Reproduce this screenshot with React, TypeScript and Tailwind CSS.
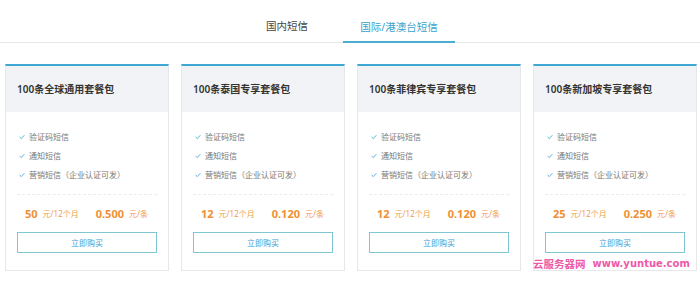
const plans = [
  { title: '100条全球通用套餐包', price: '50', unit: '0.500' },
  { title: '100条泰国专享套餐包', price: '12', unit: '0.120' },
  { title: '100条菲律宾专享套餐包', price: '12', unit: '0.120' },
  { title: '100条新加坡专享套餐包', price: '25', unit: '0.250' },
];

const features = ['验证码短信', '通知短信', '营销短信（企业认证可发）'];

function Check() {
  return (
    <svg aria-hidden="true" className="w-[6px] h-[6px] text-[#5aaedb]" viewBox="0 0 10 10" fill="none" stroke="currentColor" strokeWidth={1.6}>
      <path strokeLinecap="round" strokeLinejoin="round" d="M1.5 5.5l2.3 2.2L8.5 2.5" />
    </svg>
  );
}

function PlanCard({ title, price, unit }: { title: string; price: string; unit: string }) {
  return (
    <div className="w-[164px] border border-[#e6e8eb] border-t-2 border-t-[#3fa7d4] bg-white">
      <div className="h-[46px] bg-[#f1f3f6] px-[11px] flex items-center text-[10px] font-semibold text-[#333]">
        {title}
      </div>
      <div className="px-[11px] pt-[15px] pb-[17px]">
        <ul className="flex flex-col">
          {features.map((f) => (
            <li key={f} className="h-[19px] flex items-center gap-[4px] pl-[2px] text-[8px] text-[#777]">
              <Check />
              <span>{f}</span>
            </li>
          ))}
        </ul>
        <div className="mt-[10px] border-t border-dashed border-[#ececec]" />
        <div className="mt-[9px] h-[20px] flex items-center pl-[8px] text-[#ef8f33]">
          <span className="text-[11px] font-bold">{price}</span>
          <span className="ml-[5px] text-[8px] text-[#f0a050]">元/12个月</span>
          <span className="ml-[17px] text-[11px] font-bold">{unit}</span>
          <span className="ml-[5px] text-[8px] text-[#f0a050]">元/条</span>
        </div>
        <button
          type="button"
          className="mt-[8px] w-full h-[21px] border border-[#7fc8d3] text-[8px] text-[#3a9bd3] flex items-center justify-center"
        >
          立即购买
        </button>
      </div>
    </div>
  );
}

export default function App() {
  return (
    <div
      className="relative w-[700px] h-[287px] bg-white overflow-hidden"
      style={{ fontFamily: '"Noto Sans", "Noto Sans CJK SC", sans-serif' }}
    >
      <div className="h-[43px] border-b border-[#e6e6e6] flex justify-center items-end pr-[14px]">
        <div className="w-[112px] h-[23px] flex items-start justify-center text-[10.5px] text-[#444]">
          国内短信
        </div>
        <div className="w-[112px] h-[23px] flex items-start justify-center text-[10.5px] text-[#3aa3cf] border-b-2 border-[#4aaed0] -mb-px">
          国际/港澳台短信
        </div>
      </div>
      <div className="mt-[21px] pl-[5px] flex gap-[12px]">
        {plans.map((p) => (
          <PlanCard key={p.title} {...p} />
        ))}
      </div>
      <div className="absolute left-[533px] top-[256px] flex items-center gap-[7px] text-[#ec5aa8] font-bold">
        <span className="text-[10.5px]" style={{ fontFamily: '"Noto Sans CJK SC", sans-serif' }}>云服务器网</span>
        <span className="text-[10px]" style={{ fontFamily: '"DejaVu Sans", sans-serif' }}>www.yuntue.com</span>
      </div>
    </div>
  );
}
